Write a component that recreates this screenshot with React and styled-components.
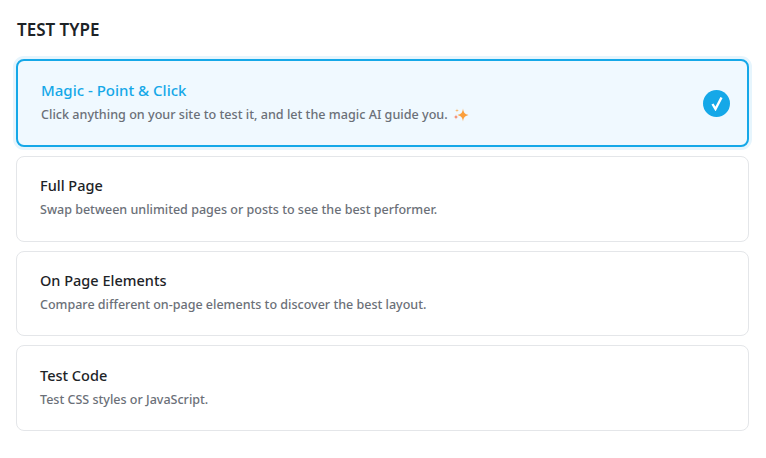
import styled, { createGlobalStyle } from "styled-components";

const Global = createGlobalStyle`
    * { box-sizing: border-box; }
    body {
        margin: 0;
        background: #fff;
        font-family: "Noto Sans", sans-serif;
    }
`

const Page = styled.div`
    padding: 19px 17px 0 16px;
`

const Heading = styled.h2`
    margin: 0 0 18px 1px;
    font-size: 17px;
    line-height: 22px;
    font-weight: 600;
    color: #1d2327;
`

const List = styled.div`
    display: flex;
    flex-direction: column;
    gap: 9.2px;
`

const Card = styled.div`
    height: ${p => p.$active ? "88px" : "85.4px"};
    display: flex;
    align-items: center;
    justify-content: space-between;
    padding: 0 17px 0 23px;
    border-radius: 8px;
    background: ${p => p.$active ? "#f0f9ff" : "#fff"};
    border: ${p => p.$active ? "2px solid #15a8e8" : "1px solid #e4e6e9"};
    box-shadow: ${p => p.$active ? "0 0 0 3px #e6f5fd" : "none"};
`

const TextBlock = styled.div`
    padding-bottom: 3px;
`

const Title = styled.div`
    font-size: ${p => p.$active ? "15px" : "14.500px"};
    line-height: 20px;
    font-weight: 500;
    color: ${p => p.$active ? "#15a8e8" : "#1d2327"};
    margin-bottom: 6px;
`

const Desc = styled.div`
    display: flex;
    align-items: center;
    gap: 5px;
    font-size: ${p => p.$active ? "12.600px" : "12.530px"};
    line-height: 18px;
    font-weight: 500;
    color: #6b7078;
`

const Check = styled.div`
    width: 27px;
    height: 27px;
    border-radius: 50%;
    background: #15a8e8;
    display: flex;
    align-items: center;
    justify-content: center;
`

const Sparkle = () => (
    <svg width="16" height="14" viewBox="0 0 16 14">
        <path d="M10 0.500C10.600 4.500 11.500 6 15.500 7C11.500 8 10.600 9.500 10 13.500C9.400 9.500 8.500 8 4.500 7C8.500 6 9.400 4.500 10 0.500Z" fill="#fb9f3c" />
        <path d="M4 0.500C4.200 2 4.500 2.300 6 2.500C4.500 2.700 4.200 3 4 4.500C3.800 3 3.500 2.700 2 2.500C3.500 2.300 3.800 2 4 0.500Z" fill="#fbb565" />
        <path d="M3 6.500C3.300 8.300 3.700 8.700 5.500 9C3.700 9.300 3.300 9.700 3 11.500C2.700 9.700 2.300 9.300 0.500 9C2.300 8.700 2.700 8.300 3 6.500Z" fill="#f4896b" />
    </svg>
)

const items = [
    { title: "Magic - Point & Click", desc: "Click anything on your site to test it, and let the magic AI guide you.", active: true },
    { title: "Full Page", desc: "Swap between unlimited pages or posts to see the best performer." },
    { title: "On Page Elements", desc: "Compare different on-page elements to discover the best layout." },
    { title: "Test Code", desc: "Test CSS styles or JavaScript." },
]

export default function App(){
    return <Page>
        <Global/>
        <Heading>TEST TYPE</Heading>
        <List>
            {items.map(item => (
                <Card key={item.title} $active={item.active}>
                    <TextBlock>
                        <Title $active={item.active}>{item.title}</Title>
                        <Desc $active={item.active}>{item.desc}{item.active ? <Sparkle/> : false}</Desc>
                    </TextBlock>
                    {item.active ? (
                        <Check>
                            <svg width="14" height="15" viewBox="0 0 14 15" fill="none">
                                <path d="M2.500 8L5.500 13L11.500 1.500" stroke="#fff" strokeWidth="2.400" />
                            </svg>
                        </Check>
                    ) : false}
                </Card>
            ))}
        </List>
    </Page>
}
